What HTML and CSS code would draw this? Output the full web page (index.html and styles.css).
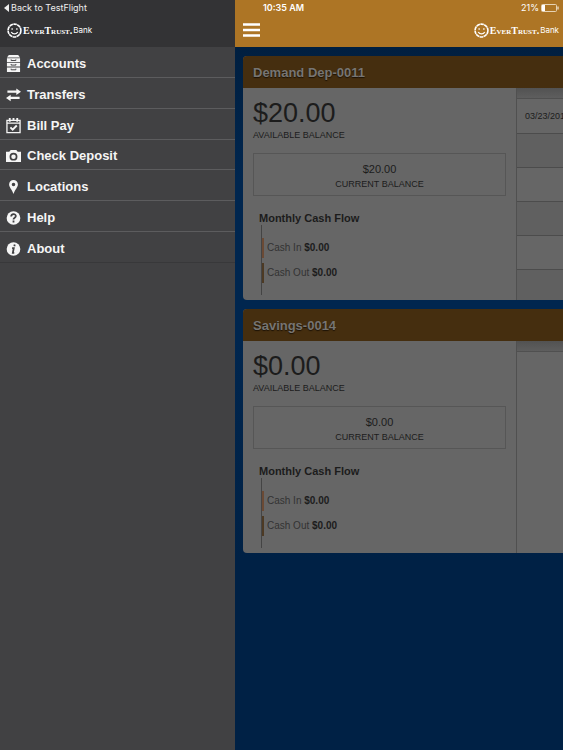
FILE: index.html
```html
<!DOCTYPE html>
<html lang="en">
<head>
<meta charset="utf-8">
<meta name="viewport" content="width=device-width, initial-scale=1">
<title>EverTrust Bank</title>
<link rel="stylesheet" href="styles.css">
</head>
<body>
<svg class="defs" aria-hidden="true">
  <symbol id="face" viewBox="0 0 14 14">
    <circle cx="7" cy="7" r="6" fill="none" stroke="currentColor" stroke-width="1.5" stroke-dasharray="3.4 .37"/>
    <path d="M4.8 5v1.4M9.2 5v1.4M4 8.4c1.4 2.4 4.6 2.4 6 0" fill="none" stroke="currentColor" stroke-width="1.2"/>
  </symbol>
</svg>
<div class="app">
  <aside class="drawer">
    <header class="drawer-head">
      <div class="status"><a class="back" href="#"><svg width="5" height="8" viewBox="0 0 5 8"><path d="M5 0v8L0 4z" fill="currentColor"/></svg>Back to TestFlight</a></div>
      <div class="bar">
        <div class="brand"><svg width="15" height="15"><use href="#face"/></svg><span class="name">EverTrust.</span><span class="bank">Bank</span></div>
      </div>
    </header>
    <nav class="menu">
      <a href="#"><svg viewBox="0 0 16 18"><path fill="currentColor" d="M3 0h10l2 2.600H1zM1 3.400h14v4H1zM1 8.300h14v4H1zM1 13.200h14V18H1z"/><path d="M5.500 4.600v1.200h5V4.600M5.500 9.500v1.200h5V9.500M5.500 14.500v1.200h5v-1.200" fill="none" stroke="#414143" stroke-width="1"/></svg>Accounts</a>
      <a href="#"><svg viewBox="0 0 16 18"><path fill="currentColor" d="M1.500 4.800H11V2.600L16 6l-5 3.400V7.200H1.500zM14.500 11.500H5V9.300l-5 3.400 5 3.400v-2.200h9.500z"/></svg>Transfers</a>
      <a href="#"><svg viewBox="0 0 16 18"><path fill="none" stroke="currentColor" stroke-width="1.400" d="M1 3.500h14v13H1zM1 6.500h14"/><path fill="none" stroke="currentColor" stroke-width="2" d="M4 1v4M8 1v3M12 1v4M4.700 11l2.400 2.500L11.500 9"/></svg>Bill Pay</a>
      <a href="#"><svg viewBox="0 0 16 18"><path fill="currentColor" fill-rule="evenodd" d="M0 5h3.500l1.500-2h6l1.500 2H16v11H0zM8 6a4.200 4.200 0 1 0 0 8.400A4.200 4.200 0 0 0 8 6zm0 1.800a2.400 2.400 0 1 1 0 4.800 2.400 2.400 0 0 1 0-4.800z"/></svg>Check Deposit</a>
      <a href="#"><svg viewBox="0 0 16 18"><path fill="currentColor" fill-rule="evenodd" d="M8 2a4.700 4.700 0 0 1 4.700 4.800C12.700 10 9.500 12 8 17 6.500 12 3.300 10 3.300 6.800A4.700 4.700 0 0 1 8 2zm0 3a1.900 1.900 0 1 0 0 3.800A1.900 1.900 0 0 0 8 5z"/></svg>Locations</a>
      <a href="#"><svg viewBox="0 0 16 18"><circle cx="8" cy="9.500" r="7.300" fill="currentColor"/><path d="M5.500 8c0-3.400 5-3.300 5-.5 0 1.900-2.500 1.700-2.500 3.700M8 12.300v2" fill="none" stroke="#414143" stroke-width="1.900"/></svg>Help</a>
      <a href="#"><svg viewBox="0 0 16 18"><circle cx="8" cy="9.500" r="7.300" fill="currentColor"/><path d="M9.300 4.700l-.4 1.900M6.500 8.500h1.800l-1 5.200h1.500" fill="none" stroke="#414143" stroke-width="1.900"/></svg>About</a>
    </nav>
  </aside>
  <main class="page">
    <header class="page-head">
      <div class="status"><span class="clock">10:35 AM</span><span class="battery">21%<svg width="18" height="8" viewBox="0 0 18 8"><rect x=".5" y=".5" width="15" height="7" rx="1" fill="none" stroke="#e6d3b5"/><path d="M1 1h3v6H1zM16.500 2.500h1v3h-1z" fill="#fff"/></svg></span></div>
      <div class="bar">
        <button class="burger" aria-label="Menu"><svg width="17" height="14" viewBox="0 0 17 14"><path d="M0 1.500h17M0 7h17M0 12.500h17" stroke="currentColor" stroke-width="2.400"/></svg></button>
        <div class="brand"><svg width="15" height="15"><use href="#face"/></svg><span class="name">EverTrust.</span><span class="bank">Bank</span></div>
      </div>
    </header>
    <div class="cards">
      <section class="card">
        <h2>Demand Dep-0011</h2>
        <div class="body">
          <div class="summary">
            <p class="amount">$20.00</p>
            <p class="label">AVAILABLE BALANCE</p>
            <div class="current"><p class="value">$20.00</p><p class="label">CURRENT BALANCE</p></div>
            <h3>Monthly Cash Flow</h3>
            <div class="flow"><p class="in">Cash In <b>$0.00</b></p><p class="out">Cash Out <b>$0.00</b></p></div>
          </div>
          <div class="activity">
            <div class="strip"></div>
            <table><tbody><tr><td>03/23/2017</td></tr><tr><td></td></tr><tr><td></td></tr><tr><td></td></tr><tr><td></td></tr><tr><td></td></tr></tbody></table>
          </div>
        </div>
      </section>
      <section class="card">
        <h2>Savings-0014</h2>
        <div class="body">
          <div class="summary">
            <p class="amount">$0.00</p>
            <p class="label">AVAILABLE BALANCE</p>
            <div class="current"><p class="value">$0.00</p><p class="label">CURRENT BALANCE</p></div>
            <h3>Monthly Cash Flow</h3>
            <div class="flow"><p class="in">Cash In <b>$0.00</b></p><p class="out">Cash Out <b>$0.00</b></p></div>
          </div>
          <div class="activity"><div class="strip"></div></div>
        </div>
      </section>
    </div>
  </main>
</div>
</body>
</html>
```
FILE: styles.css
```css
* { box-sizing: border-box; }
body, h2, h3, p { margin: 0; }
body { font-family: "Liberation Sans", Arial, sans-serif; color: #1c1c1c; }
.defs { display: none; }
.app { display: grid; grid-template-columns: 235px minmax(0, 1fr); min-height: 100vh; }

.drawer { background: #414143; color: #fff; }
.drawer-head, .page-head { height: 47px; color: #fff; }
.drawer-head { background: #333335; }
.page-head { background: #ad7525; }
.status { display: flex; align-items: center; height: 15px; padding: 0 4px; font: 9px/15px Inter, sans-serif; }
.back { display: flex; align-items: center; gap: 2px; color: #eee; text-decoration: none; }
.bar { display: flex; align-items: center; justify-content: space-between; height: 30px; padding: 0 4px 0 7px; }
.brand { display: flex; align-items: center; }
.name { margin-left: 1px; font: bold 10px/15px "Liberation Serif", serif; font-variant: small-caps; }
.bank { margin-left: 1px; font: 8px/15px Inter, sans-serif; }

.menu { display: grid; grid-template-rows: repeat(7, 1fr); height: 216px; }
.menu a { display: flex; align-items: center; gap: 6px; padding: 3px 6px 0; border-bottom: 1px solid #5c5c5e; color: #f5f5f5; font-size: 13px; font-weight: bold; text-decoration: none; }
.menu a:last-child { border-color: #38383a; }
.menu svg { width: 15px; height: 17px; }

.page { overflow: hidden; background: linear-gradient(#001f40 48px, #00264f 180px, #00264f 340px, #002145 560px); }
.clock { margin-left: 24px; font-weight: 600; }
.battery { display: flex; align-items: center; gap: 2px; margin-left: auto; }
.burger { display: flex; margin-left: 1px; padding: 0; border: 0; background: none; color: #fff; }

.cards { display: flex; flex-direction: column; gap: 9px; padding: 9px 0 9px 8px; }
.card { overflow: hidden; border-radius: 4px 0 0 4px; background: #666; }
.card h2 { padding: 2px 0 0 10px; background: #452e0f; color: #777573; font-size: 13px; line-height: 30px; text-shadow: 0 1px 1px #1c1206; }
.body { display: flex; height: 212px; }
.summary { flex: 0 0 273px; padding: 9px 10px 0; }
.amount { font-size: 27px; line-height: 32px; }
.label { font-size: 9px; line-height: 12px; }
.current { height: 43px; margin: 12px 0 15px; padding-top: 8px; border: 1px solid #565656; text-align: center; }
.value { font-size: 11px; line-height: 14px; }
.current .label { line-height: 16px; }
.summary h3 { padding-left: 6px; font-size: 11px; line-height: 14px; }
.flow { display: flex; flex-direction: column; gap: 5px; margin-left: 8px; padding: 13px 0 12px; border-left: 1px solid #444; }
.flow p { padding-left: 3px; border-left: 2px solid; font-size: 10px; line-height: 20px; color: #333; }
.flow b { color: #1c1c1c; }
.flow .in { border-color: #6b4a35; }
.flow .out { border-color: #4d3a24; }
.activity { flex: 1; border-left: 1px solid #505050; }
.strip { height: 11px; border-bottom: 1px solid #505050; background: linear-gradient(#525252, #5e5e5e); }
.activity table { width: 100%; border-collapse: collapse; }
.activity td { height: 34px; padding: 0 8px; border-bottom: 1px solid #4c4c4c; font-size: 9px; }
.activity tr:nth-child(even) { background: #606060; }
```
